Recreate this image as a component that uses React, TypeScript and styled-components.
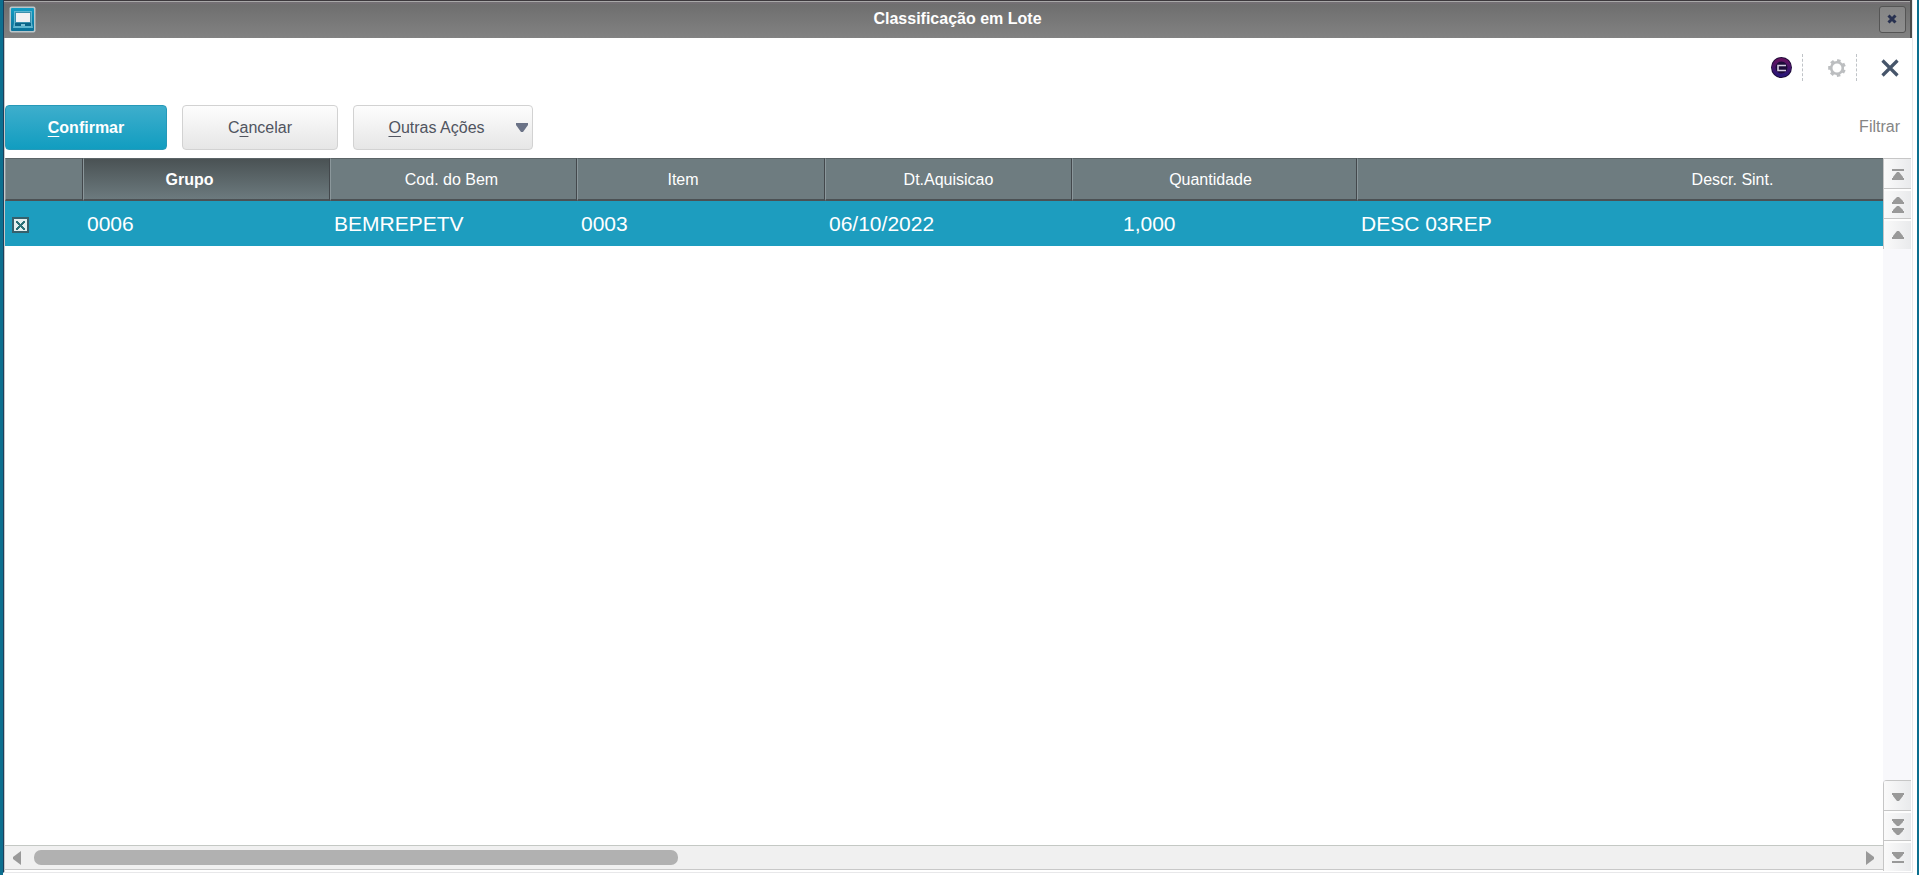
import React from "react";
import styled, { createGlobalStyle, css } from "styled-components";

const GlobalStyle = createGlobalStyle`
  * { box-sizing: border-box; }
  body {
    margin: 0;
    background: #fff;
    font-family: "Liberation Sans", Arial, sans-serif;
    font-size: 16px;
  }
  button { font: inherit; margin: 0; padding: 0; cursor: pointer; }
`;

const Frame = styled.div`
  height: 100vh;
  min-height: 480px;
  display: flex;
  border-left: 3px solid #0d6f8f;
  border-right: 2px solid #0d6f8f;
  padding: 0 4px 2px 0;
`;

const Dialog = styled.main`
  flex: 1;
  min-width: 0;
  display: flex;
  flex-direction: column;
  border-left: 1px solid #1c3f5c;
  border-right: 1px solid #e8e8ea;
  border-bottom: 1px solid #e8e8ea;
`;

const TitleBar = styled.header`
  height: 38px;
  flex: none;
  display: flex;
  align-items: center;
  justify-content: space-between;
  padding: 0 4px 0 5px;
  background: linear-gradient(#3c383c 0 1px, #a8a8a8 1px 2px, #747074 2px 4px, #6e6e6e 4px, #828282);
  border-right: 2px solid #4a4a4a;
`;

const Title = styled.h1`
  margin: 0;
  font-size: 16px;
  line-height: 20px;
  color: #fff;
`;

const TitleClose = styled.button`
  width: 27px;
  height: 27px;
  display: grid;
  place-items: center;
  border: 1px solid #555;
  border-radius: 3px;
  background: linear-gradient(#858585, #8f8f8f);
`;

const Content = styled.div`
  flex: 1;
  min-height: 0;
  display: flex;
  flex-direction: column;
  border-left: 1px solid #c8c8c8;
  padding: 0 1px 1px 0;
`;

const IconBar = styled.div`
  height: 67px;
  flex: none;
  display: flex;
  justify-content: flex-end;
  align-items: flex-start;
  padding: 16px 12px 0 0;
`;

const IconButton = styled.button<{ $divided?: boolean }>`
  width: ${(p) => (p.$divided ? 54 : 42)}px;
  height: 27px;
  display: flex;
  align-items: center;
  justify-content: flex-end;
  border: 0;
  background: none;
  ${(p) => p.$divided && css`
    padding-right: 10px;
    border-right: 1px dashed #bfc3c7;
  `}
`;

const ActionBar = styled.div`
  height: 53px;
  flex: none;
  display: flex;
  align-items: flex-start;
`;

const ActionButton = styled.button<{ $primary?: boolean; $width: number }>`
  width: ${(p) => p.$width}px;
  height: 45px;
  margin-right: 15px;
  display: flex;
  align-items: center;
  justify-content: center;
  border-radius: 4px;
  border: 1px solid ${(p) => (p.$primary ? "#2699b8" : "#d2d2d2")};
  background: ${(p) =>
    p.$primary ? "linear-gradient(#3eaecc, #119dc0)" : "linear-gradient(#fdfdfd, #e6e6e6)"};
  color: ${(p) => (p.$primary ? "#fff" : "#50545f")};
  font-weight: ${(p) => (p.$primary ? 700 : 400)};
  u { text-underline-offset: 3px; text-decoration-skip-ink: none; }
`;

const MenuLabel = styled.span`
  flex: 1;
  text-align: center;
  padding-left: 20px;
`;

const MenuArrow = styled.svg`
  margin: 0 4px 0 17px;
`;

const FilterLink = styled.a`
  margin: 12px 11px 0 auto;
  line-height: 20px;
  color: #858585;
  text-decoration: none;
`;

const Browse = styled.section`
  flex: 1;
  min-height: 0;
  display: flex;
`;

const BrowseMain = styled.div`
  flex: 1;
  min-width: 0;
  display: flex;
  flex-direction: column;
`;

const GridViewport = styled.div`
  flex: 1;
  min-height: 0;
  overflow: hidden;
`;

const Grid = styled.table`
  table-layout: fixed;
  width: 2103px;
  border-collapse: separate;
  border-spacing: 0;
`;

const Column = styled.col<{ $width: number }>`
  width: ${(p) => p.$width}px;
`;

const HeadCell = styled.th<{ $sorted?: boolean; $gutter?: number }>`
  height: 43px;
  padding: 1px ${(p) => p.$gutter ?? 0}px 0 0;
  border-top: 1px solid #5b6467;
  border-bottom: 2px solid #4c5154;
  border-left: 1px solid #8b979b;
  border-right: 1px solid #43484c;
  background: ${(p) => (p.$sorted ? "linear-gradient(#4a5254, #6c7a7e)" : "#6e7c80")};
  color: #fff;
  font-size: 16px;
  font-weight: ${(p) => (p.$sorted ? 700 : 400)};
  text-align: center;
`;

const Cell = styled.td<{ $indent?: number }>`
  height: 45px;
  padding: 0 0 0 ${(p) => p.$indent ?? 4}px;
  background: #1d9dbf;
  color: #fff;
  font-size: 21px;
  line-height: 24px;
  white-space: nowrap;
`;

const RowCheck = styled.input`
  appearance: none;
  display: block;
  width: 17px;
  height: 16px;
  margin: 3px 0 0;
  border: 2px solid #35606c;
  background: #e4efef;
  &:checked {
    background:
      linear-gradient(45deg, transparent 41%, #2b7178 41% 59%, transparent 59%) center / 9px 9px no-repeat,
      linear-gradient(135deg, transparent 41%, #2b7178 41% 59%, transparent 59%) center / 9px 9px no-repeat,
      #e4efef;
  }
`;

const HScroll = styled.div`
  height: 25px;
  flex: none;
  display: flex;
  align-items: center;
  margin-bottom: 1px;
  border-top: 1px solid #c4c8c4;
  border-bottom: 1px solid #c8c8c8;
  background: #f0f0f0;
`;

const HScrollButton = styled.button`
  width: 29px;
  height: 23px;
  flex: none;
  display: grid;
  place-items: center;
  padding-right: 6px;
  border: 0;
  background: none;
  &:last-child { width: 20px; }
`;

const HTrack = styled.div`
  flex: 1;
`;

const HThumb = styled.div`
  width: 35.2%;
  height: 15px;
  border-radius: 7px;
  background: #b1b1b1;
`;

const VScroll = styled.div`
  width: 28px;
  flex: none;
  display: flex;
  flex-direction: column;
  background: #f8f8fb;
`;

const VButton = styled.button`
  width: 28px;
  height: 30px;
  flex: none;
  display: grid;
  place-items: center;
  padding-top: 2px;
  border: 0 solid #c6c6c6;
  border-left-width: 1px;
  background: linear-gradient(90deg, #fafafa, #e9eaec);
`;

const ButtonStack = styled.div<{ $end?: boolean }>`
  display: flex;
  flex-direction: column;
  border-top: 1px solid #c6c6c6;
  ${(p) => p.$end && css`
    margin-top: auto;
    border-top-left-radius: 4px;
    overflow: hidden;
  `}
  ${VButton}:not(:last-child) {
    border-bottom-width: 1px;
  }
  ${VButton}:not(:first-child) {
    box-shadow: inset 0 2px #fdfdfd;
  }
`;

const MonitorIcon = () => (
  <svg width="27" height="27" viewBox="0 0 27 27" aria-hidden="true">
    <defs>
      <linearGradient id="monitor" x1="0" y1="0" x2="0" y2="1">
        <stop offset="0" stopColor="#129cc3" />
        <stop offset="1" stopColor="#0b7198" />
      </linearGradient>
    </defs>
    <rect x="0.5" y="0.5" width="26" height="26" rx="2" fill="#b9c6ca" />
    <rect x="2" y="2" width="23" height="23" rx="1" fill="url(#monitor)" />
    <path d="M5 5h18v12l1 5H4l1-5z" fill="#5fb5cf" />
    <rect x="6" y="6" width="16" height="11" fill="#3a8fad" />
    <rect x="7" y="7" width="14" height="9" fill="#f1f1f3" />
    <path d="M6 17h16v3H6z" fill="#0b6488" />
    <path d="M12 18h4v2h-4z" fill="#7cc0d5" />
  </svg>
);

const SmallX = () => (
  <svg width="10" height="10" viewBox="0 0 10 10" aria-hidden="true">
    <path d="M1.5 1.5L8.5 8.5M8.5 1.5L1.5 8.5" stroke="#283150" strokeWidth="3" />
  </svg>
);

const ProfileIcon = () => (
  <svg width="21" height="21" viewBox="0 0 21 21" aria-hidden="true">
    <defs>
      <linearGradient id="ring" x1="0" y1="0" x2="0" y2="1">
        <stop offset="0" stopColor="#64125f" />
        <stop offset="1" stopColor="#2a1678" />
      </linearGradient>
    </defs>
    <circle cx="10.5" cy="10.5" r="10.5" fill="#1d0b38" />
    <circle cx="10.5" cy="10.5" r="7.8" fill="none" stroke="url(#ring)" strokeWidth="3.6" />
    <path d="M15 8.5H7v5h8" fill="none" stroke="#d6cce2" strokeWidth="1.6" />
  </svg>
);

const GearIcon = () => (
  <svg width="18" height="18" viewBox="0 0 18 18" fill="none" stroke="#bcbec0" aria-hidden="true">
    <circle cx="9" cy="9" r="5.8" strokeWidth="2.6" />
    <g strokeWidth="3.6">
      {[14, 65, 117, 168, 220, 271, 322].map((angle) => (
        <path key={angle} d="M9 3.2V0.2" transform={`rotate(${angle} 9 9)`} />
      ))}
    </g>
  </svg>
);

const LargeX = () => (
  <svg width="18" height="18" viewBox="0 0 18 18" aria-hidden="true">
    <path d="M1.5 1.5L16.5 16.5M16.5 1.5L1.5 16.5" stroke="#46556a" strokeWidth="3.2" />
  </svg>
);

const paths = {
  first: "M0 0h12v2H0zM5 3h2l4 5v1h1v2H0V9h1V8z",
  pageUp: "M5 0h2l4 4v1h1v2H0V5h1V4zM5 9h2l4 4v1h1v2H0v-2h1v-1z",
  up: "M5 0h2l4 5v1h1v2H0V6h1V5z",
  down: "M0 0h12v2h-1v1L7 8H5L1 3V2H0z",
  pageDown: "M0 0h12v2h-1v1L7 7H5L1 3V2H0zM0 9h12v2h-1v1l-4 4H5l-4-4v-1H0z",
  last: "M0 0h12v2h-1v1L7 7H5L1 3V2H0zM0 9h12v2H0z",
};

const Glyph = ({ name }: { name: keyof typeof paths }) => {
  const h = name.startsWith("page") ? 16 : name === "up" || name === "down" ? 8 : 11;
  return (
    <svg width="12" height={h} viewBox={`0 0 12 ${h}`} fill="#999" aria-hidden="true">
      <path d={paths[name]} />
    </svg>
  );
};

const columns = [
  { label: "", value: "", width: 78 },
  { label: "Grupo", value: "0006", width: 247, sorted: true, gutter: 34 },
  { label: "Cod. do Bem", value: "BEMREPETV", width: 247, gutter: 4 },
  { label: "Item", value: "0003", width: 248, gutter: 36 },
  { label: "Dt.Aquisicao", value: "06/10/2022", width: 247 },
  { label: "Quantidade", value: "1,000", width: 285, indent: 51, gutter: 8 },
  { label: "Descr. Sint.", value: "DESC 03REP", width: 751 },
];

export default function App() {
  return (
    <>
      <GlobalStyle />
      <Frame>
        <Dialog>
          <TitleBar>
            <MonitorIcon />
            <Title>Classificação em Lote</Title>
            <TitleClose aria-label="Fechar janela"><SmallX /></TitleClose>
          </TitleBar>
          <Content>
            <IconBar>
              <IconButton $divided aria-label="Perfil"><ProfileIcon /></IconButton>
              <IconButton $divided aria-label="Configurações"><GearIcon /></IconButton>
              <IconButton aria-label="Fechar"><LargeX /></IconButton>
            </IconBar>
            <ActionBar>
              <ActionButton $primary $width={162}><span><u>C</u>onfirmar</span></ActionButton>
              <ActionButton $width={156}><span>C<u>a</u>ncelar</span></ActionButton>
              <ActionButton $width={180} aria-haspopup="menu">
                <MenuLabel><u>O</u>utras Ações</MenuLabel>
                <MenuArrow width="12" height="9" viewBox="0 0 12 9" fill="#6b7387" aria-hidden="true">
                  <path d="M0 0h12v2L7 9H5L0 2z" />
                </MenuArrow>
              </ActionButton>
              <FilterLink href="#filtrar">Filtrar</FilterLink>
            </ActionBar>
            <Browse>
              <BrowseMain>
                <GridViewport>
                  <Grid>
                    <colgroup>
                      {columns.map((c) => <Column key={c.label} $width={c.width} />)}
                    </colgroup>
                    <thead>
                      <tr>
                        {columns.map((c) => (
                          <HeadCell key={c.label} scope="col" $sorted={c.sorted} $gutter={c.gutter}>
                            {c.label}
                          </HeadCell>
                        ))}
                      </tr>
                    </thead>
                    <tbody>
                      <tr>
                        {columns.map((c) =>
                          c.label ? (
                            <Cell key={c.label} $indent={c.indent}>{c.value}</Cell>
                          ) : (
                            <Cell key="check" $indent={7}>
                              <RowCheck type="checkbox" defaultChecked aria-label="Selecionar 0006" />
                            </Cell>
                          )
                        )}
                      </tr>
                    </tbody>
                  </Grid>
                </GridViewport>
                <HScroll>
                  <HScrollButton aria-label="Rolar para a esquerda">
                    <svg width="8" height="14" viewBox="0 0 8 14" fill="#999"><path d="M8 0v14L0 8V6z" /></svg>
                  </HScrollButton>
                  <HTrack><HThumb /></HTrack>
                  <HScrollButton aria-label="Rolar para a direita">
                    <svg width="8" height="14" viewBox="0 0 8 14" fill="#999"><path d="M0 0v14L8 8V6z" /></svg>
                  </HScrollButton>
                </HScroll>
              </BrowseMain>
              <VScroll>
                <ButtonStack>
                  <VButton aria-label="Primeiro"><Glyph name="first" /></VButton>
                  <VButton aria-label="Página anterior"><Glyph name="pageUp" /></VButton>
                  <VButton aria-label="Anterior"><Glyph name="up" /></VButton>
                </ButtonStack>
                <ButtonStack $end>
                  <VButton aria-label="Próximo"><Glyph name="down" /></VButton>
                  <VButton aria-label="Próxima página"><Glyph name="pageDown" /></VButton>
                  <VButton aria-label="Último"><Glyph name="last" /></VButton>
                </ButtonStack>
              </VScroll>
            </Browse>
          </Content>
        </Dialog>
      </Frame>
    </>
  );
}
